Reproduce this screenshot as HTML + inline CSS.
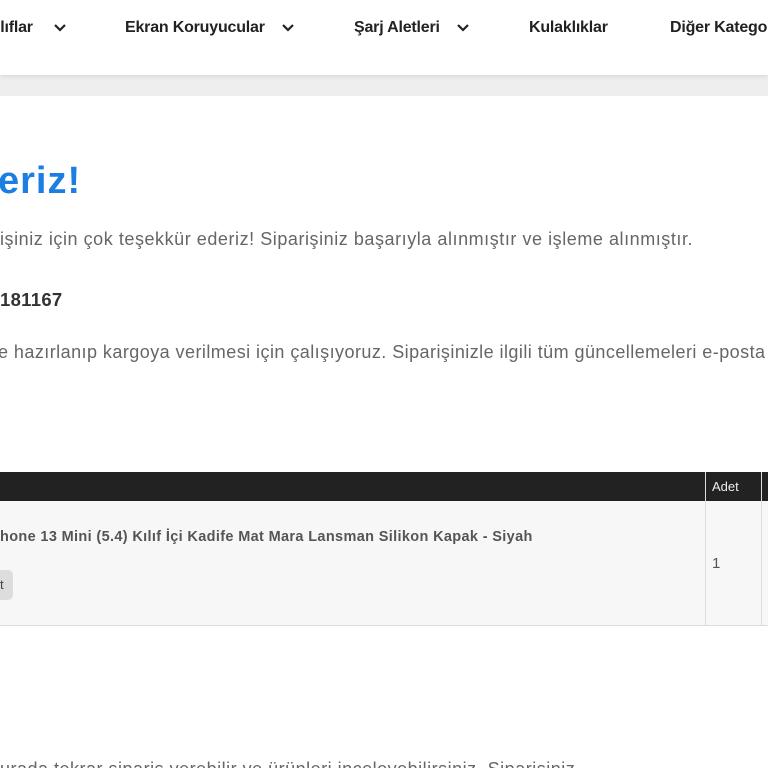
<!DOCTYPE html>
<html><head><meta charset="utf-8"><style>
html,body{margin:0;width:768px;height:768px;overflow:hidden}
body{background:#fff;font-family:"Liberation Sans",sans-serif;position:relative}
#w{position:absolute;left:0;top:0;width:768px;height:768px;overflow:hidden}
.a{position:absolute;white-space:nowrap}
.nav{font-weight:bold;font-size:16px;color:#222;top:19px;letter-spacing:-0.2px}
.chev{position:absolute;top:23px;width:14px;height:10px}
</style></head><body><div id="w">
<div class="a" style="left:0;top:0;width:768px;height:75px;background:#fff;box-shadow:0 2px 4px rgba(0,0,0,.08);z-index:2"></div>
<div class="a" style="left:0;top:75px;width:768px;height:21px;background:#eeeeee"></div>
<div style="position:absolute;z-index:3;left:0;top:0;width:768px;height:75px">
<span class="a nav" style="left:-4px">ılıflar</span>
<svg class="chev" style="left:53px" viewBox="0 0 14 10"><path d="M2 2l5 5 5-5" stroke="#222" stroke-width="2.2" fill="none"/></svg>
<span class="a nav" style="left:125px">Ekran Koruyucular</span>
<svg class="chev" style="left:281px" viewBox="0 0 14 10"><path d="M2 2l5 5 5-5" stroke="#222" stroke-width="2.2" fill="none"/></svg>
<span class="a nav" style="left:354px">Şarj Aletleri</span>
<svg class="chev" style="left:456px" viewBox="0 0 14 10"><path d="M2 2l5 5 5-5" stroke="#222" stroke-width="2.2" fill="none"/></svg>
<span class="a nav" style="left:529px">Kulaklıklar</span>
<span class="a nav" style="left:670px">Diğer Kategoriler</span>
</div>
<span class="a" style="left:-2px;top:160px;font-size:38px;font-weight:bold;letter-spacing:1px;color:#1a7fe0">eriz!</span>
<span class="a" style="left:0;top:229px;font-size:18px;letter-spacing:0.55px;color:#666">işiniz için çok teşekkür ederiz! Siparişiniz başarıyla alınmıştır ve işleme alınmıştır.</span>
<span class="a" style="left:0;top:289px;font-size:18.5px;font-weight:bold;letter-spacing:0.3px;color:#333">181167</span>
<span class="a" style="left:-2px;top:342px;font-size:18px;letter-spacing:0.45px;color:#666">e hazırlanıp kargoya verilmesi için çalışıyoruz. Siparişinizle ilgili tüm güncellemeleri e-posta</span>
<div class="a" style="left:0;top:472px;width:768px;height:29px;background:#222"></div>
<div class="a" style="left:0;top:501px;width:768px;height:124px;background:#f7f7f7;border-bottom:1px solid #ddd"></div>
<div class="a" style="left:705px;top:472px;width:1px;height:153px;background:#ddd"></div>
<div class="a" style="left:761px;top:472px;width:1px;height:153px;background:#ddd"></div>
<span class="a" style="left:712px;top:479px;font-size:13px;color:#eee">Adet</span>
<span class="a" style="left:0;top:529px;font-size:14.5px;font-weight:bold;letter-spacing:0.35px;color:#555">hone 13 Mini (5.4) Kılıf İçi Kadife Mat Mara Lansman Silikon Kapak - Siyah</span>
<div class="a" style="left:-20px;top:570px;width:33px;height:30px;background:#ddd;border-radius:5px"></div>
<span class="a" style="left:0;top:577px;font-size:13px;color:#444">t</span>
<span class="a" style="left:712px;top:555px;font-size:15px;color:#555">1</span>
<span class="a" style="left:0;top:759px;font-size:18px;letter-spacing:0.5px;color:#666">urada tekrar sipariş verebilir ve ürünleri inceleyebilirsiniz. Siparişiniz</span>
</div></body></html>
